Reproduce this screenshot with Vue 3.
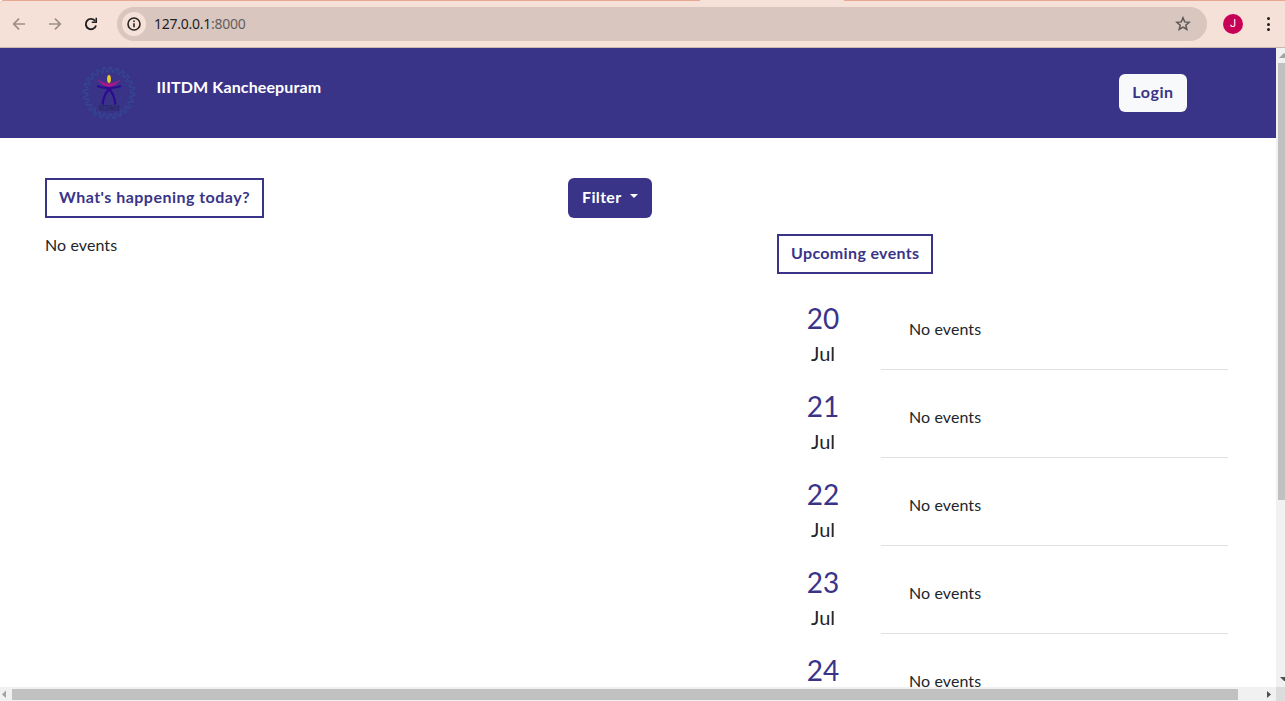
<script setup>
const days = [20, 21, 22, 23, 24]
const teeth = 24
const points = []
for (let i = 0; i < teeth * 4; i++) {
  const r = i % 4 < 2 ? 25.8 : 21.3
  const a = ((i + 0.5) / (teeth * 4)) * Math.PI * 2
  points.push(`${(27 + r * Math.cos(a)).toFixed(2)},${(27 + r * Math.sin(a)).toFixed(2)}`)
}
const gear = points.join(' ')
</script>

<template>
  <div class="window">
    <div class="toolbar">
      <span class="tab-gap"></span>
      <svg class="nav back" width="14" height="14" viewBox="0 0 14 14"><path d="M13 7H2M7 1.7 1.7 7 7 12.3" /></svg>
      <svg class="nav forward" width="14" height="14" viewBox="0 0 14 14"><path d="M1 7H12M7 1.7 12.3 7 7 12.3" /></svg>
      <svg class="nav reload" width="14" height="14" viewBox="0 0 14 14"><path d="M11.2 4A5.2 5.2 0 1 0 12 8.6" /><path class="solid" d="M13 .8V6H7.8V4.6H11.5V.8Z" /></svg>
      <div class="address">
        <span class="info"><svg width="14" height="14" viewBox="0 0 14 14"><circle cx="7" cy="7" r="6" /><path d="M7 6.2V10.2M7 3.6V5" /></svg></span>
        <span class="url">127.0.0.1<span class="port">:8000</span></span>
        <svg class="star" width="16" height="16" viewBox="0 0 16 16"><path d="M8 1.8 9.7 5.9 14.1 6.3 10.8 9.2 11.8 13.5 8 11.2 4.2 13.5 5.2 9.2 1.9 6.3 6.3 5.9Z" /></svg>
      </div>
      <span class="avatar">J</span>
      <span class="dots"><i></i><i></i><i></i></span>
    </div>

    <div class="body">
      <div class="page">
        <header class="header">
          <svg class="logo" width="54" height="54" viewBox="0 0 54 54">
            <polygon class="gear" :points="gear" />
            <path class="figure" d="M15 20Q21 22 27 22Q34 22 39 20M25.5 22Q32 26 33.5 38.5M29 22Q22 26 20.5 38.5" />
            <path class="arms" d="M16 14Q27 21.5 38 14Q32 20.8 27 20.6Q21 20.4 16 14Z" />
            <ellipse class="head" cx="27" cy="13" rx="1.9" ry="4" />
            <text x="27" y="42.5" text-anchor="middle" textLength="21">IITD&amp;M</text>
            <path class="base" d="M17 44H38" />
          </svg>
          <span class="brand">IIITDM Kancheepuram</span>
          <button class="login"><span>Login</span></button>
        </header>
        <main class="content">
          <section class="today">
            <h2 class="boxed"><span class="today-title">What's happening today?</span></h2>
            <p class="none">No events</p>
          </section>
          <button class="filter"><span>Filter</span><i class="caret"></i></button>
          <section class="upcoming">
            <h2 class="boxed"><span class="upcoming-title">Upcoming events</span></h2>
            <div v-for="(day, index) in days" :key="day" class="day-row">
              <div class="date"><span class="number">{{ day }}</span><span v-if="index < 4" class="month">Jul</span></div>
              <div class="entry"><span class="none">No events</span></div>
            </div>
          </section>
        </main>
      </div>
      <div class="scroll-y">
        <svg class="up" width="9" height="15" viewBox="0 0 9 15"><path d="M3 10 8 5 9 6V10Z" /></svg>
        <span class="thumb-y"></span>
        <svg class="down" width="9" height="10" viewBox="0 0 9 10"><path d="M4 2H9V6L8 6Z" /></svg>
      </div>
    </div>
    <div class="scroll-x">
      <svg width="12" height="14" viewBox="0 0 12 14"><path class="left" d="M2 7.5 6 3.5V11Z" /></svg>
      <span class="thumb-x"></span>
      <svg class="right-arrow" width="38" height="14" viewBox="0 0 38 14"><path d="M29 4V11L33 7.5Z" /></svg>
      <span class="corner"></span>
    </div>
  </div>
</template>

<style>
html, body { margin: 0; overflow: hidden; background: #fff; }
</style>

<style scoped>
* { box-sizing: border-box; }
.window { width: 1285px; height: 701px; display: flex; flex-direction: column; overflow: hidden; font: 16px/24px Lato, sans-serif; color: #212529; }
.toolbar { position: relative; height: 48px; flex: none; display: flex; align-items: center; background: #f6e1d8; border-top: 1px solid #e9a793; border-bottom: 1px solid #cbb5af; border-top-left-radius: 4px; }
.tab-gap { position: absolute; left: 700px; top: -1px; width: 144px; height: 1px; background: #f6e1d8; }
svg { display: block; flex: none; }
.nav { fill: none; stroke: #9c8e89; stroke-width: 1.7; }
.back { margin-left: 12px; }
.forward { margin-left: 22px; }
.reload { margin-left: 22px; stroke: #1f1f1f; stroke-width: 1.9; }
.solid { fill: #1f1f1f; stroke: none; }
.address { margin-left: 19px; width: 1090px; height: 34px; border-radius: 17px; background: #d8c6bf; display: flex; align-items: center; padding: 0 16px 0 5px; }
.info { width: 24px; height: 24px; border-radius: 50%; background: #f6e1d8; display: grid; place-items: center; }
.info svg { fill: none; stroke: #2a2423; stroke-width: 1.6; }
.url { margin-left: 8px; font: 14px/20px "Noto Sans", sans-serif; letter-spacing: -.25px; color: #1f1f1f; }
.port { color: #66605e; }
.star { margin-left: auto; fill: none; stroke: #5e5957; stroke-width: 1.5; }
.avatar { margin-left: 16px; width: 20px; height: 20px; border-radius: 50%; background: #c80056; color: #fff; font: 11px/20px Roboto, sans-serif; text-align: center; }
.dots { margin-left: 24px; display: flex; flex-direction: column; gap: 2.5px; }
.dots i { width: 3px; height: 3px; border-radius: 50%; background: #1f1f1f; }
.body { flex: 1; min-height: 0; display: flex; }
.page { width: 1276px; overflow: hidden; background: #fff; }
.header { height: 90px; background: #3a3488; display: flex; align-items: flex-start; padding: 18px 89px 0 82px; }
.gear { fill: none; stroke: #304e9c; stroke-width: 1; stroke-linejoin: round; }
.figure { fill: none; stroke: #2d0b91; stroke-width: 2.3; }
.arms { fill: #ae168c; stroke: #ae168c; stroke-width: .6; }
.head { fill: #f0c82e; }
.logo text { font: bold 6px Lato, sans-serif; fill: #252660; }
.base { stroke: #292968; stroke-width: 1; }
.brand { margin: 9px 0 0 20.5px; color: #fff; font-weight: 700; letter-spacing: .12px; white-space: nowrap; }
button { font: 700 16px/24px Lato, sans-serif; border: 0; border-radius: 6px; padding: 0; flex: none; }
.login { margin: 8px 0 0 auto; width: 68px; height: 38px; padding-bottom: 2px; background: #f8f9fa; color: #3a3488; letter-spacing: .55px; }
.content { display: flex; align-items: flex-start; padding: 40px 48px 0 45px; }
.today { width: 523px; }
h2 { margin: 0; font-size: 16px; line-height: 24px; }
.boxed { width: fit-content; height: 40px; border: 2px solid #3a3488; padding: 5px 12px; color: #3a3488; white-space: nowrap; }
.today .boxed { width: 219px; }
.upcoming .boxed { width: 156px; }
.today-title { letter-spacing: .48px; }
.upcoming-title { letter-spacing: .35px; }
.none { margin: 0; letter-spacing: .09px; }
p.none { margin-top: 15px; }
.filter { width: 84px; height: 40px; background: #3a3488; color: #fff; display: flex; align-items: center; padding: 0 0 2px 14px; letter-spacing: .35px; }
.filter span { width: 48px; text-align: left; }
.caret { margin-top: -2px; border: 4px solid transparent; border-top-color: #fff; border-bottom: 0; }
.upcoming { width: 451px; margin: 56px 0 0 125px; }
.day-row { height: 88px; display: flex; }
.upcoming .boxed { margin-bottom: 8px; }
.date { width: 92px; margin-right: 12px; padding-top: 18px; display: flex; flex-direction: column; align-items: center; }
.number { font-size: 28px; line-height: 36px; color: #3a3488; }
.month { margin-top: -1px; font-size: 20px; line-height: 36px; }
.entry { width: 347px; padding: 35px 0 0 28px; border-bottom: 1px solid #dee2e6; }
.scroll-y { width: 9px; background: #f1f1f1; display: flex; flex-direction: column; }
.up { fill: #a3a3a3; }
.thumb-y { height: 437px; margin-left: 2px; background: #c1c1c1; }
.down { margin-top: auto; margin-bottom: 2px; fill: #505050; }
.scroll-x { height: 14px; flex: none; background: #f1f1f1; display: flex; }
.left { fill: #a3a3a3; }
.thumb-x { width: 1226px; height: 11px; margin-top: 2px; background: #c1c1c1; }
.right-arrow { flex: none; fill: #505050; }
.corner { width: 9px; background: #dcdcdc; }
</style>
